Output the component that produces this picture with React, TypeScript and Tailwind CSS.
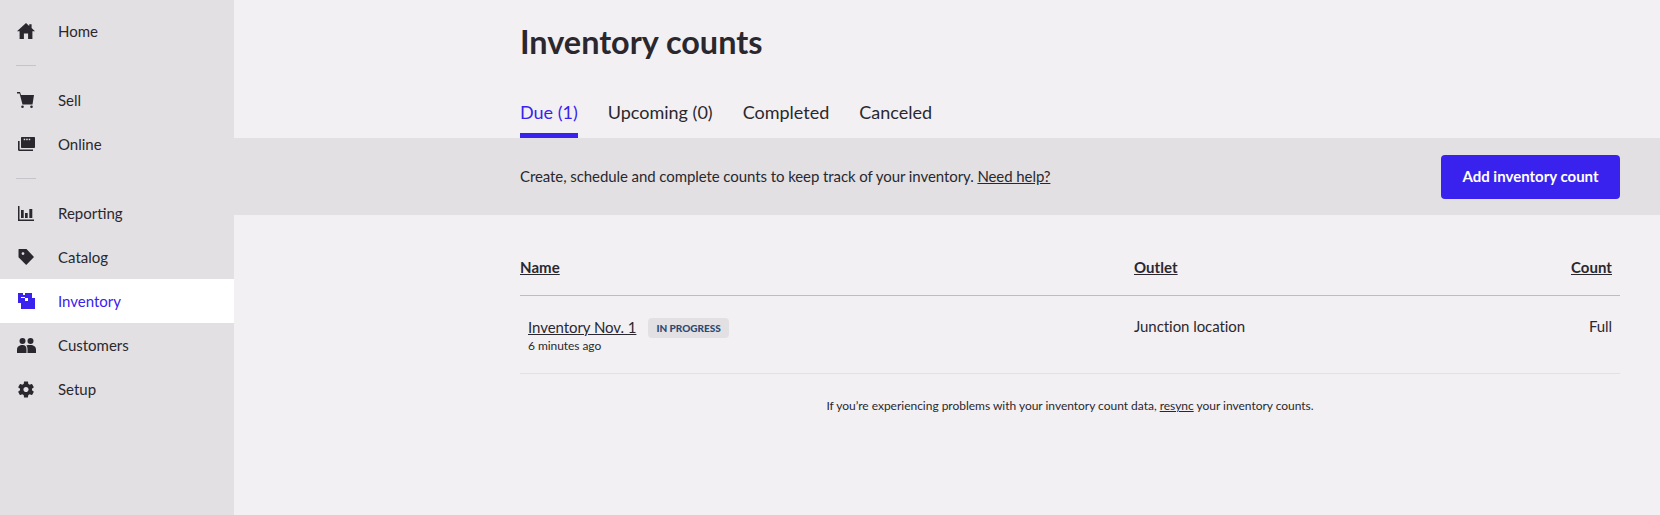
import type { ReactNode } from "react";

const HomeIcon = () => (
  <svg viewBox="0 0 18 16" className="h-4 w-[18px]" fill="currentColor">
    <path d="M9 0l3.200 2.900V1.200h2.400v3.900L18 8.200h-2.600V16h-4.300v-5.400H6.900V16H2.600V8.200H0z" />
  </svg>
);

const CartIcon = () => (
  <svg viewBox="0 0 18 16" className="h-4 w-[18px]" fill="currentColor">
    <path d="M0 0h3l1 3h13l-1.500 9.500H5.500L2.600 1.500H0z" />
    <circle cx="5.500" cy="14.700" r="1.300" />
    <circle cx="14.500" cy="14.700" r="1.300" />
  </svg>
);

const OnlineIcon = () => (
  <svg viewBox="0 0 17 14" className="h-3.5 w-[17px]" fill="currentColor">
    <path d="M4 0h12c.6 0 1 .4 1 1v9c0 .6-.4 1-1 1H4c-.6 0-1-.4-1-1V1c0-.6.4-1 1-1z" />
    <path d="M0 4h1.600v8.400H15V14H1.200C.5 14 0 13.500 0 12.800z" />
    <rect x="5.700" y="1.700" width="1.500" height="1.500" fill="#e2e0e3" />
    <rect x="8.200" y="1.700" width="1.500" height="1.500" fill="#e2e0e3" />
    <rect x="10.700" y="1.700" width="1.500" height="1.500" fill="#e2e0e3" />
  </svg>
);

const ReportingIcon = () => (
  <svg viewBox="0 0 16 15" className="h-[15px] w-4" fill="currentColor">
    <path d="M0 0h1.500v13.500H16V15H0z" />
    <rect x="3" y="4" width="2.700" height="8" />
    <rect x="7" y="7" width="2.700" height="5" />
    <rect x="11.300" y="3" width="3" height="9" />
  </svg>
);

const CatalogIcon = () => (
  <svg viewBox="0 0 16 16" className="h-4 w-4" fill="currentColor">
    <path fillRule="evenodd" d="M1 0h7.500L16 8l-7.800 8L.5 8.200V1c0-.6.100-1 .500-1zm4 3.200a1.400 1.400 0 100 2.800 1.400 1.400 0 000-2.800z" />
  </svg>
);

const InventoryIcon = () => (
  <svg viewBox="0 0 17 16" className="h-4 w-[17px]" fill="currentColor">
    <path d="M0 0h5v2h2V0h7v5H7V4H3v6H0z" />
    <path d="M3 5h4v3h3V5h7v11H3z" />
  </svg>
);

const CustomersIcon = () => (
  <svg viewBox="0 0 19 15" className="h-[15px] w-[19px]" fill="currentColor">
    <circle cx="5.500" cy="3" r="3" />
    <circle cx="13.500" cy="3" r="3" />
    <path d="M0 15v-3.500C0 8.500 2.500 7 5.500 7s4 1.500 4 4.500V15z" />
    <path d="M10.500 15v-3.500c0-1.800-.4-3.200-1.200-4 .9-.4 2.500-.5 4.200-.5 3 0 5.500 1.500 5.500 4.500V15z" />
  </svg>
);

const SetupIcon = () => (
  <svg viewBox="2.500 1.800 19 20.400" className="h-[17px] w-4" fill="currentColor">
    <path d="M19.140 12.940c.04-.3.06-.61.06-.94 0-.32-.02-.64-.07-.94l2.030-1.580c.18-.14.23-.41.12-.61l-1.920-3.320c-.12-.22-.37-.29-.59-.22l-2.390.96c-.5-.38-1.030-.7-1.620-.94l-.36-2.540c-.04-.24-.24-.41-.48-.41h-3.840c-.24 0-.43.17-.47.41l-.36 2.540c-.59.24-1.130.57-1.620.94l-2.390-.96c-.22-.08-.47 0-.59.22L2.740 8.870c-.12.21-.08.47.12.61l2.030 1.580c-.05.3-.09.63-.09.94s.02.64.07.94l-2.030 1.580c-.18.14-.23.41-.12.61l1.920 3.320c.12.22.37.29.59.22l2.390-.96c.5.38 1.030.7 1.620.94l.36 2.540c.05.24.24.41.48.41h3.840c.24 0 .44-.17.47-.41l.36-2.540c.59-.24 1.130-.56 1.620-.94l2.390.96c.22.08.47 0 .59-.22l1.920-3.320c.12-.22.07-.47-.12-.61l-2.010-1.580zM12 15.100c-1.710 0-3.100-1.390-3.100-3.100s1.390-3.100 3.100-3.100 3.100 1.390 3.100 3.100-1.390 3.100-3.100 3.100z" />
  </svg>
);

function NavItem({ icon, label, active }: { icon: ReactNode; label: string; active?: boolean }) {
  return (
    <a
      href="#"
      className={
        active
          ? "flex h-11 items-center bg-white text-[#3a22ee]"
          : "flex h-11 items-center text-[#2a282e]"
      }
    >
      <span className="flex w-[58px] justify-center pr-1.5">{icon}</span>
      <span className="text-[15px]">{label}</span>
    </a>
  );
}

const Divider = () => <div className="my-3 ml-4 h-px w-5 bg-[#c5c4c8]" />;

export default function App() {
  return (
    <div className="flex h-screen overflow-hidden bg-[#f2f0f3] font-['Lato',sans-serif] text-[#2a282e]">
      <aside className="w-[234px] shrink-0 bg-[#e2e0e3] pt-[9px]">
        <NavItem icon={<HomeIcon />} label="Home" />
        <Divider />
        <NavItem icon={<CartIcon />} label="Sell" />
        <NavItem icon={<OnlineIcon />} label="Online" />
        <Divider />
        <NavItem icon={<ReportingIcon />} label="Reporting" />
        <NavItem icon={<CatalogIcon />} label="Catalog" />
        <NavItem icon={<InventoryIcon />} label="Inventory" active />
        <NavItem icon={<CustomersIcon />} label="Customers" />
        <NavItem icon={<SetupIcon />} label="Setup" />
      </aside>

      <main className="min-w-0 flex-1">
        <div className="pl-[286px] pr-10">
          <h1 className="pt-[21px] text-[32.4px] leading-[42px] font-bold">Inventory counts</h1>
          <nav className="mt-[25px] flex gap-[30px] text-lg">
            <a href="#" className="h-[50px] border-b-[5px] border-[#3a22ee] pt-[12px] leading-6 text-[#3a22ee]">Due (1)</a>
            <a href="#" className="pt-[12px] leading-6">Upcoming (0)</a>
            <a href="#" className="pt-[12px] leading-6">Completed</a>
            <a href="#" className="pt-[12px] leading-6">Canceled</a>
          </nav>
        </div>

        <div className="flex h-[77px] items-center justify-between bg-[#e2e0e3] pl-[286px] pr-10">
          <p className="text-[15px] tracking-[-0.08px]">
            Create, schedule and complete counts to keep track of your inventory.{" "}
            <a href="#" className="underline">Need help?</a>
          </p>
          <button type="button" className="h-11 w-[179px] rounded bg-[#3a22ee] text-[15px] font-bold text-white">
            Add inventory count
          </button>
        </div>

        <div className="pl-[286px] pr-10 pt-[40px]">
          <div className="grid h-[41px] grid-cols-[614px_1fr_auto] border-b border-[#bdbcc0] pb-4 text-[15px] leading-6 font-bold tracking-[0.05px] underline">
            <span>Name</span>
            <span>Outlet</span>
            <span className="pr-2">Count</span>
          </div>
          <div className="grid h-[78px] grid-cols-[614px_1fr_auto] border-b border-[#e2e0e3] pt-[20px] text-[15px] tracking-[-0.06px]">
            <div className="pl-2">
              <div className="flex items-center gap-3 leading-5">
                <a href="#" className="underline">Inventory Nov. 1</a>
                <span className="mt-0.5 rounded bg-[#e2e0e3] px-2 text-[10px] leading-5 font-black tracking-normal text-[#2c4a70]">IN PROGRESS</span>
              </div>
              <div className="text-xs leading-4">6 minutes ago</div>
            </div>
            <div className="leading-5">Junction location</div>
            <div className="pr-2 leading-5">Full</div>
          </div>
          <p className="pt-[24px] text-center text-xs leading-4 tracking-[-0.02px]">
            If you’re experiencing problems with your inventory count data,{" "}
            <a href="#" className="underline">resync</a> your inventory counts.
          </p>
        </div>
      </main>
    </div>
  );
}
